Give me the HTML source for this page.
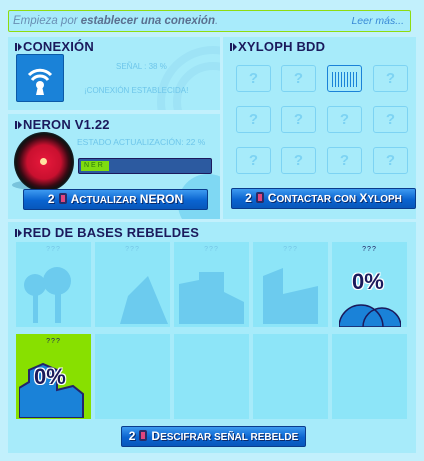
<!DOCTYPE html>
<html><head><meta charset="utf-8"><style>
*{margin:0;padding:0;box-sizing:border-box}
body{width:424px;height:461px;background:#c2f0fc;font-family:"Liberation Sans",sans-serif;position:relative;overflow:hidden}
.a{position:absolute}
.panel{position:absolute;background:#a7ebfa}
.h{position:absolute;font-weight:bold;font-size:13px;color:#1b1a5c;letter-spacing:0.2px}
.h:before{content:"";display:inline-block;width:2px;height:8px;background:#1b1a5c;margin-right:1px;vertical-align:0}
.h i{display:inline-block;width:0;height:0;border-left:4px solid #1b1a5c;border-top:4px solid transparent;border-bottom:4px solid transparent;margin-right:1px;vertical-align:0}
.btn{position:absolute;height:21px;background:linear-gradient(#3d9af0,#0a64d0 55%,#0857bb);border:1px solid #0a3c8c;border-radius:2px;color:#fff;font-weight:bold;font-size:12px;text-align:center;line-height:19px;text-shadow:1px 1px 0 #0a2a6a}
.gem{display:inline-block;width:8px;height:11px;background:#e0457e;border:2px solid #2b2b66;border-radius:2px;vertical-align:-1px;margin:0 4px}
.q{position:absolute;width:35px;height:27px;border:1px solid #7dd3f3;border-radius:3px;color:#7dd3f3;font-weight:bold;font-size:15px;text-align:center;line-height:25px}
.t{position:absolute;width:75px;height:85px;background:#8de5f8}
.t span{position:absolute;top:4px;width:100%;text-align:center;font-size:7px;color:#76c6e6;letter-spacing:1px}
.pc{position:absolute;font-weight:bold;font-size:22px;color:#1b1a5c;text-shadow:-1px -1px 0 #fff,1px -1px 0 #fff,-1px 1px 0 #fff,1px 1px 0 #fff}
</style></head><body>
<div class="a" style="left:8px;top:10px;width:403px;height:22px;border:1px solid #8fdc0f;border-radius:2px;background:#a8ebfb;font-style:italic;font-size:11.5px;color:#6a8fb4;line-height:20px;padding-left:4px">Empieza por <b style="color:#5a7090">establecer una conexión</b>.<span style="position:absolute;right:6px;color:#3a8ad6;font-size:10.5px">Leer más...</span></div>

<div class="panel" style="left:8px;top:37px;width:212px;height:73px;overflow:hidden">
 <div class="a" style="left:165px;top:25px;width:80px;height:80px;border-radius:50%;border:8px solid #9ee3f6;box-shadow:0 0 0 8px #a7ebfa,0 0 0 16px #9ee3f6"></div>
</div>
<div class="h" style="left:15px;top:39px"><i></i>CONEXIÓN</div>
<div class="a" style="left:16px;top:54px;width:48px;height:48px;background:#1a82d8;border:1px solid #0b5aa8;border-radius:2px">
<svg width="46" height="46" viewBox="0 0 46 46"><path d="M12 20a15 15 0 0 1 22 0M15 25a10 10 0 0 1 16 0" stroke="#fff" stroke-width="3" fill="none"/><circle cx="23" cy="30" r="4" fill="#fff"/><path d="M21 31h4l2 9h-8z" fill="#fff"/></svg></div>
<div class="a" style="left:116px;top:62px;font-size:8px;color:#6ec6ea">SEÑAL : 38 %</div>
<div class="a" style="left:84px;top:86px;font-size:8px;color:#6ec6ea">¡CONEXIÓN ESTABLECIDA!</div>

<div class="panel" style="left:8px;top:114px;width:212px;height:105px;overflow:hidden">
 <div class="a" style="left:170px;top:60px;width:60px;height:60px;border-radius:50%;background:#7fd8f3"></div>
</div>
<div class="h" style="left:15px;top:117px"><i></i>NERON V1.22</div>
<div class="a" style="left:12px;top:180px;width:50px;height:10px;border-radius:50%;background:#5aa8c8;opacity:.6"></div>
<div class="a" style="left:14px;top:132px;width:60px;height:60px;border-radius:50%;background:radial-gradient(circle,#e8193c 0,#c9102f 40%,#3a0a14 58%,#111 66%,#2a6f8f 92%,#1d4f66 100%)"></div>
<div class="a" style="left:40px;top:158px;width:7px;height:7px;border-radius:50%;background:#ffe3a0"></div>
<div class="a" style="left:77px;top:137px;font-size:8.5px;color:#6ec6ea">ESTADO ACTUALIZACIÓN: 22 %</div>
<div class="a" style="left:78px;top:158px;width:134px;height:16px;background:#2c5aa0;border:1px solid #1b1a5c;border-radius:2px"><div style="margin:2px;width:28px;height:10px;background:#7fdc10;font-size:7px;color:#2a7a10;line-height:10px;letter-spacing:2px;padding-left:3px">NER</div></div>
<div class="btn" style="left:23px;top:189px;width:185px">2<span class="gem"></span>A<small>CTUALIZAR</small> NERON</div>

<div class="panel" style="left:223px;top:37px;width:193px;height:182px"></div>
<div class="h" style="left:230px;top:39px"><i></i>XYLOPH BDD</div>
<div class="q" style="left:236px;top:65px">?</div><div class="q" style="left:281px;top:65px">?</div>
<div class="q" style="left:327px;top:65px;border-color:#1a82d8;background:repeating-linear-gradient(90deg,#1a82d8 0 1px,transparent 1px 3px) 4px 6px/27px 15px no-repeat"></div>
<div class="q" style="left:373px;top:65px">?</div>
<div class="q" style="left:236px;top:106px">?</div><div class="q" style="left:281px;top:106px">?</div><div class="q" style="left:327px;top:106px">?</div><div class="q" style="left:373px;top:106px">?</div>
<div class="q" style="left:236px;top:147px">?</div><div class="q" style="left:281px;top:147px">?</div><div class="q" style="left:327px;top:147px">?</div><div class="q" style="left:373px;top:147px">?</div>
<div class="btn" style="left:231px;top:188px;width:185px">2<span class="gem"></span>C<small>ONTACTAR CON</small> X<small>YLOPH</small></div>

<div class="panel" style="left:8px;top:222px;width:408px;height:231px"></div>
<div class="h" style="left:15px;top:225px"><i></i>RED DE BASES REBELDES</div>
<div class="t" style="left:16px;top:242px"><span>???</span><svg class="a" style="left:5px;top:25px" width="60" height="58"><circle cx="14" cy="18" r="11" fill="#6ccbee"/><circle cx="36" cy="14" r="14" fill="#6ccbee"/><rect x="12" y="26" width="5" height="30" fill="#6ccbee"/><rect x="34" y="26" width="6" height="30" fill="#6ccbee"/></svg></div>
<div class="t" style="left:95px;top:242px"><span>???</span><svg class="a" style="left:5px;top:30px" width="68" height="52"><path d="M20 52l8-28 20-20 20 48z" fill="#6ccbee"/></svg></div>
<div class="t" style="left:174px;top:242px"><span>???</span><svg class="a" style="left:5px;top:20px" width="68" height="62"><path d="M0 62v-40l20-4v-8h25v20l20 10v22z" fill="#6ccbee"/></svg></div>
<div class="t" style="left:253px;top:242px"><span>???</span><svg class="a" style="left:10px;top:20px" width="60" height="62"><path d="M0 62v-48l20-8v56zM20 62v-30l35-8v38z" fill="#6ccbee"/></svg></div>
<div class="t" style="left:332px;top:242px"><span style="color:#1b1a5c">???</span><svg class="a" style="left:7px;top:50px" width="62" height="35"><path d="M0 35a22 22 0 0 1 44 0zM24 35a19 19 0 0 1 38 0z" fill="#1a82d8" stroke="#1b1a5c" stroke-width="1.5"/></svg><div class="pc" style="left:20px;top:27px">0%</div></div>
<div class="t" style="left:16px;top:334px;background:#88e000"><span style="color:#1b1a5c">???</span><svg class="a" style="left:3px;top:22px" width="66" height="62"><path d="M0 62v-30l10-6v-12l14-6 14 6v20l16-4 10 8v24z" fill="#1a82d8" stroke="#24236a" stroke-width="2"/></svg><div class="pc" style="left:18px;top:30px">0%</div></div>
<div class="t" style="left:95px;top:334px"></div><div class="t" style="left:174px;top:334px"></div><div class="t" style="left:253px;top:334px"></div><div class="t" style="left:332px;top:334px"></div>
<div class="btn" style="left:121px;top:426px;width:185px">2<span class="gem"></span>D<small>ESCIFRAR SEÑAL REBELDE</small></div>
</body></html>
